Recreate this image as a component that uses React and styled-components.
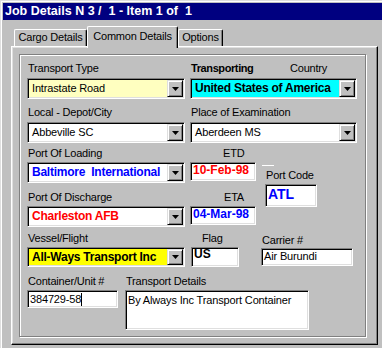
import React from 'react';
import styled, { createGlobalStyle } from 'styled-components';

const Global = createGlobalStyle`
  html, body { margin: 0; padding: 0; background: #c0c0c0; }
  body { font-family: "Liberation Sans", Arial, sans-serif; }
`;

const Window = styled.div`
  width: 382px;
  height: 348px;
  box-sizing: border-box;
  background: #c0c0c0;
  border-top: 1px solid #dfdfdf;
  border-left: 1px solid #dfdfdf;
  box-shadow: inset 1px 1px 0 #fff;
  padding: 2px 0 0 2px;
  overflow: hidden;
  font-family: "Liberation Sans", Arial, sans-serif;
  font-size: 11px;
  color: #000;
`;

const TitleBar = styled.div`
  height: 17px;
  background: #000080;
  color: #fff;
  font-weight: bold;
  font-size: 12.5px;
  line-height: 17px;
  padding-left: 2px;
  white-space: pre;
`;

const Body = styled.div`
  padding-left: 8px;
`;

const TabStrip = styled.div`
  display: flex;
  align-items: flex-end;
  padding: 6px 0 0 3px;
`;

const Tab = styled.div`
  box-sizing: border-box;
  width: ${p => p.$w}px;
  height: ${p => (p.$active ? 22 : 17)}px;
  margin-bottom: ${p => (p.$active ? -2 : 0)}px;
  position: relative;
  z-index: ${p => (p.$active ? 2 : 1)};
  background: #c0c0c0;
  border-top: 1px solid #fff;
  border-left: 1px solid #fff;
  border-right: 1px solid #000;
  border-radius: 2px 2px 0 0;
  box-shadow: inset -1px 0 0 #808080;
  text-align: center;
  padding-top: ${p => (p.$active ? 3 : 1)}px;
  line-height: 13px;
  letter-spacing: -0.2px;
  white-space: pre;
`;

const Panel = styled.div`
  width: 367px;
  height: 299px;
  box-sizing: border-box;
  border: 1px solid;
  border-color: #fff #000 #000 #fff;
  box-shadow: inset -1px -1px 0 #808080, inset 1px 1px 0 #dfdfdf;
  padding: 7px 0 0 7px;
`;

const Group = styled.div`
  width: 347px;
  height: 283px;
  box-sizing: border-box;
  border: 1px solid #808080;
  box-shadow: 1px 1px 0 #fff, inset 1px 1px 0 #fff;
  padding: 7px 0 0 7px;
  display: flex;
  flex-direction: column;
`;

const Row = styled.div`
  display: flex;
  align-items: flex-start;
  margin-top: ${p => p.$mt || 0}px;
`;

const Column = styled.div`
  display: flex;
  flex-direction: column;
`;

const FieldGroup = styled.div`
  display: flex;
  flex-direction: column;
  width: ${p => p.$w}px;
  margin-left: ${p => p.$ml || 0}px;
`;

const Label = styled.div`
  height: 13px;
  line-height: 13px;
  padding-left: ${p => (p.$pl === undefined ? 1 : p.$pl)}px;
  margin-top: ${p => p.$mt || 0}px;
  margin-bottom: ${p => (p.$mb === undefined ? 3 : p.$mb)}px;
  font-weight: ${p => (p.$bold ? 'bold' : 'normal')};
  letter-spacing: ${p => (p.$bold ? '-0.4px' : '-0.2px')};
  white-space: pre;
`;

const LabelPair = styled.div`
  display: grid;
  grid-template-columns: 100px auto;
  margin-bottom: 3px;
`;

const sunken = `
  box-sizing: border-box;
  border: 1px solid;
  border-color: #808080 #fff #fff #808080;
  box-shadow: inset 1px 1px 0 #000, inset -1px -1px 0 #dfdfdf;
`;

const Combo = styled.div`
  ${sunken}
  height: ${p => p.$h || 21}px;
  padding: 1px;
  background: ${p => p.$bg || '#fff'};
  display: flex;
  align-items: stretch;
`;

const ComboText = styled.div`
  flex: 1;
  min-width: 0;
  padding-left: 3px;
  line-height: ${p => (p.$h || 21) - 4}px;
  font-size: ${p => (p.$bold ? 12 : 11)}px;
  font-weight: ${p => (p.$bold ? 'bold' : 'normal')};
  letter-spacing: ${p => (p.$bold ? '-0.25px' : '-0.15px')};
  color: ${p => p.$color || '#000'};
  white-space: pre;
  overflow: hidden;
`;

const DropButton = styled.div`
  width: 16px;
  flex: none;
  box-sizing: border-box;
  background: #c0c0c0;
  border: 1px solid;
  border-color: #dfdfdf #000 #000 #dfdfdf;
  box-shadow: inset 1px 1px 0 #fff, inset -1px -1px 0 #808080;
  display: flex;
  align-items: center;
  justify-content: center;
`;

const TextBox = styled.div`
  ${sunken}
  width: ${p => p.$w}px;
  height: ${p => p.$h}px;
  padding: ${p => p.$pt || 0}px 2px 0 2px;
  background: #fff;
  line-height: ${p => p.$lh || 13}px;
  font-size: ${p => p.$fs || 11}px;
  font-weight: ${p => (p.$bold ? 'bold' : 'normal')};
  letter-spacing: ${p => (p.$bold ? '0' : '-0.15px')};
  color: ${p => p.$color || '#000'};
  white-space: pre;
  overflow: hidden;
`;

const Caret = styled.span`
  display: inline-block;
  width: 1px;
  height: 13px;
  background: #000;
  vertical-align: top;
`;

const Tick = styled.div`
  width: 12px;
  height: 1px;
  background: #fff;
  margin: 18px 0 0 -3px;
`;

const Arrow = () => (
  <svg width="7" height="4" viewBox="0 0 7 4">
    <polygon points="0,0 7,0 3.5,4" fill="#000" />
  </svg>
);

const Select = ({ value, bg, color, bold, h }) => (
  <Combo $bg={bg} $h={h}>
    <ComboText $bold={bold} $color={color} $h={h}>{value}</ComboText>
    <DropButton><Arrow /></DropButton>
  </Combo>
);

export default function App() {
  return (
    <>
      <Global />
      <Window>
        <TitleBar>{'Job Details N 3 /  1 - Item 1 of  1'}</TitleBar>
        <Body>
          <TabStrip>
            <Tab $w={73}>Cargo Details</Tab>
            <Tab $w={91} $active>Common Details</Tab>
            <Tab $w={45}>Options</Tab>
          </TabStrip>
          <Panel>
            <Group>
              <Row>
                <FieldGroup $w={158}>
                  <Label>Transport Type</Label>
                  <Select value="Intrastate Road" bg="#ffffc0" />
                </FieldGroup>
                <FieldGroup $w={167} $ml={5}>
                  <LabelPair>
                    <Label $bold $mb={0}>Transporting</Label>
                    <Label $mb={0} $pl={0}>Country</Label>
                  </LabelPair>
                  <Select value="United States of America" bg="#00ffff" bold />
                </FieldGroup>
              </Row>
              <Row $mt={7}>
                <FieldGroup $w={158}>
                  <Label>{'Local - Depot/City'}</Label>
                  <Select value="Abbeville SC" />
                </FieldGroup>
                <FieldGroup $w={167} $ml={5}>
                  <Label>Place of Examination</Label>
                  <Select value="Aberdeen MS" />
                </FieldGroup>
              </Row>
              <Row $mt={4}>
                <Column>
                  <Row>
                    <FieldGroup $w={158}>
                      <Label $mb={2}>Port Of Loading</Label>
                      <Select value={'Baltimore  International'} color="#0000ff" bold />
                    </FieldGroup>
                    <FieldGroup $w={66} $ml={5}>
                      <Label $mb={2} $pl={33}>ETD</Label>
                      <TextBox $w={66} $h={19} $pt={1} $fs={12} $bold $color="#ff0000">10-Feb-98</TextBox>
                    </FieldGroup>
                  </Row>
                  <Row $mt={8}>
                    <FieldGroup $w={158}>
                      <Label $mb={2}>Port Of Discharge</Label>
                      <Select value="Charleston AFB" color="#ff0000" bold />
                    </FieldGroup>
                    <FieldGroup $w={66} $ml={5}>
                      <Label $mb={2} $pl={34}>ETA</Label>
                      <TextBox $w={66} $h={19} $pt={1} $fs={12} $bold $color="#0000ff">04-Mar-98</TextBox>
                    </FieldGroup>
                  </Row>
                </Column>
                <FieldGroup $w={52} $ml={9}>
                  <Tick />
                  <Label $mt={3} $mb={2}>Port Code</Label>
                  <TextBox $w={52} $h={23} $pt={1} $lh={17} $fs={14} $bold $color="#0000ff">ATL</TextBox>
                </FieldGroup>
              </Row>
              <Row $mt={5}>
                <FieldGroup $w={158}>
                  <Label $mb={2}>Vessel/Flight</Label>
                  <Select value="All-Ways Transport Inc" bg="#ffff00" bold h={20} />
                </FieldGroup>
                <FieldGroup $w={48} $ml={6}>
                  <Label $mb={2} $pl={11}>Flag</Label>
                  <TextBox $w={48} $h={20} $pt={0} $fs={12} $bold>US</TextBox>
                </FieldGroup>
                <FieldGroup $w={92} $ml={22}>
                  <Label $mt={2} $mb={1}>Carrier #</Label>
                  <TextBox $w={92} $h={18} $pt={1}>Air Burundi</TextBox>
                </FieldGroup>
              </Row>
              <Row $mt={8}>
                <FieldGroup $w={91}>
                  <Label $mb={2}>Container/Unit #</Label>
                  <TextBox $w={91} $h={18} $pt={2}>384729-58<Caret /></TextBox>
                </FieldGroup>
                <FieldGroup $w={184} $ml={7}>
                  <Label $mb={2}>Transport Details</Label>
                  <TextBox $w={184} $h={40} $pt={3}>By Always Inc Transport Container</TextBox>
                </FieldGroup>
              </Row>
            </Group>
          </Panel>
        </Body>
      </Window>
    </>
  );
}
